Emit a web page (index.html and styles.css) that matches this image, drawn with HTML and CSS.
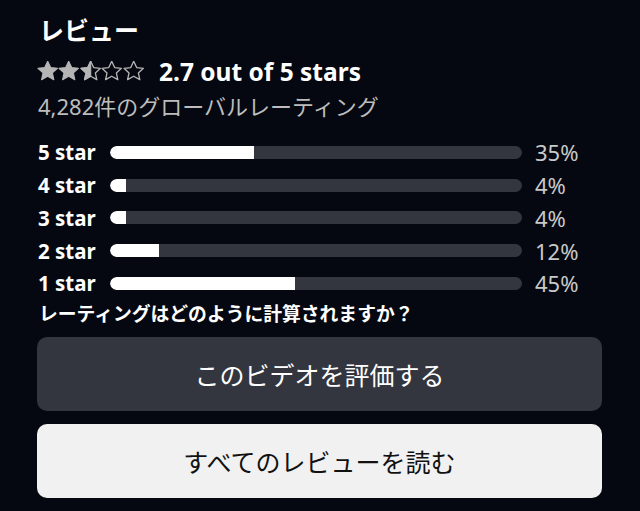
FILE: index.html
```html
<!DOCTYPE html>
<html lang="ja">
<head>
  <meta charset="UTF-8" />
  <meta name="viewport" content="width=device-width, initial-scale=1.0"/>
  <title>レビュー</title>
  <link rel="stylesheet" href="styles.css">
</head>
<body>
  <section class="reviews">
    <h2 class="title">レビュー</h2>

    <div class="rating">
      <span class="stars">
        <svg viewBox="1 1.5 22 21" class="star"><path class="full" d="M12 1.8l3.1 6.6 7.1.8-5.3 4.8 1.5 7.1L12 17.5l-6.4 3.6 1.5-7.1-5.3-4.8 7.1-.8z"/></svg>
        <svg viewBox="1 1.5 22 21" class="star"><path class="full" d="M12 1.8l3.1 6.6 7.1.8-5.3 4.8 1.5 7.1L12 17.5l-6.4 3.6 1.5-7.1-5.3-4.8 7.1-.8z"/></svg>
        <svg viewBox="1 1.5 22 21" class="star">
          <path class="empty" d="M12 1.8l3.1 6.6 7.1.8-5.3 4.8 1.5 7.1L12 17.5l-6.4 3.6 1.5-7.1-5.3-4.8 7.1-.8z"/>
          <path class="full" d="M12 1.8v15.7l-6.4 3.6 1.5-7.1-5.3-4.8 7.1-.8z"/>
        </svg>
        <svg viewBox="1 1.5 22 21" class="star"><path class="empty" d="M12 1.8l3.1 6.6 7.1.8-5.3 4.8 1.5 7.1L12 17.5l-6.4 3.6 1.5-7.1-5.3-4.8 7.1-.8z"/></svg>
        <svg viewBox="1 1.5 22 21" class="star"><path class="empty" d="M12 1.8l3.1 6.6 7.1.8-5.3 4.8 1.5 7.1L12 17.5l-6.4 3.6 1.5-7.1-5.3-4.8 7.1-.8z"/></svg>
      </span>
      <span class="score">2.7 out of 5 stars</span>
    </div>

    <p class="count">4,282件のグローバルレーティング</p>

    <!-- Histogram -->
    <div class="histogram">
      <span class="label">5 star</span>
      <div class="track"><div class="fill" style="width:35%"></div></div>
      <span class="pct">35%</span>

      <span class="label">4 star</span>
      <div class="track"><div class="fill" style="width:4%"></div></div>
      <span class="pct">4%</span>

      <span class="label">3 star</span>
      <div class="track"><div class="fill" style="width:4%"></div></div>
      <span class="pct">4%</span>

      <span class="label">2 star</span>
      <div class="track"><div class="fill" style="width:12%"></div></div>
      <span class="pct">12%</span>

      <span class="label">1 star</span>
      <div class="track"><div class="fill" style="width:45%"></div></div>
      <span class="pct">45%</span>
    </div>

    <p class="how">レーティングはどのように計算されますか？</p>

    <button class="btn btn-dark">このビデオを評価する</button>
    <button class="btn btn-light">すべてのレビューを読む</button>
  </section>
</body>
</html>
```

FILE: styles.css
```css
:root {
  --bg: #050810;
  --track: #33363e;
  --btn-dark: #33363f;
  --btn-light: #f1f1f1;
  --muted: #bdbdbd;
  --star: #b5b5b5;
  --white: #fff;
}

* {
  box-sizing: border-box;
  margin: 0;
  padding: 0;
}

body {
  font-family: "Noto Sans", "Noto Sans CJK JP", sans-serif;
  background: var(--bg);
  color: var(--white);
  width: 640px;
  height: 511px;
  overflow: hidden;
}

.reviews {
  padding: 15px 38px 0 38px;
}

.title {
  font-size: 25px;
  font-weight: 700;
  line-height: 30px;
  padding-left: 1px;
}

.rating {
  display: flex;
  align-items: center;
  height: 32px;
  margin-top: 10px;
}

.stars {
  display: flex;
  width: 122px;
  margin-left: -1px;
}

.star {
  width: 21.4px;
  height: 20px;
}

.star .full {
  fill: var(--star);
  stroke: var(--star);
  stroke-width: 1.2;
  stroke-linejoin: round;
}

.star .empty {
  fill: none;
  stroke: var(--star);
  stroke-width: 1.4;
  stroke-linejoin: round;
}

.score {
  font-size: 24.5px;
  font-weight: 700;
}

.count {
  color: var(--muted);
  font-size: 22px;
  line-height: 30px;
  margin-top: 4px;
}

.histogram {
  display: grid;
  grid-template-columns: 72px 412px auto;
  grid-auto-rows: 32.75px;
  align-items: center;
  margin-top: 15px;
}

.label {
  font-size: 20.5px;
  font-weight: 700;
}

.track {
  height: 13px;
  border-radius: 7px;
  background: var(--track);
  overflow: hidden;
}

.fill {
  height: 100%;
  background: var(--white);
  border-radius: 7px 0 0 7px;
}

.pct {
  color: #c9c9c9;
  font-size: 22px;
  padding-left: 13px;
}

.how {
  font-size: 18.8px;
  font-weight: 700;
  line-height: 24px;
  margin-top: 2px;
  padding-left: 1px;
}

.btn {
  display: block;
  width: 565px;
  height: 74px;
  margin-left: -1px;
  border: none;
  border-radius: 10px;
  font-family: inherit;
  font-size: 25px;
  cursor: pointer;
}

.btn-dark {
  background: var(--btn-dark);
  color: var(--white);
  margin-top: 11px;
}

.btn-light {
  background: var(--btn-light);
  color: #111;
  margin-top: 13px;
}
```
